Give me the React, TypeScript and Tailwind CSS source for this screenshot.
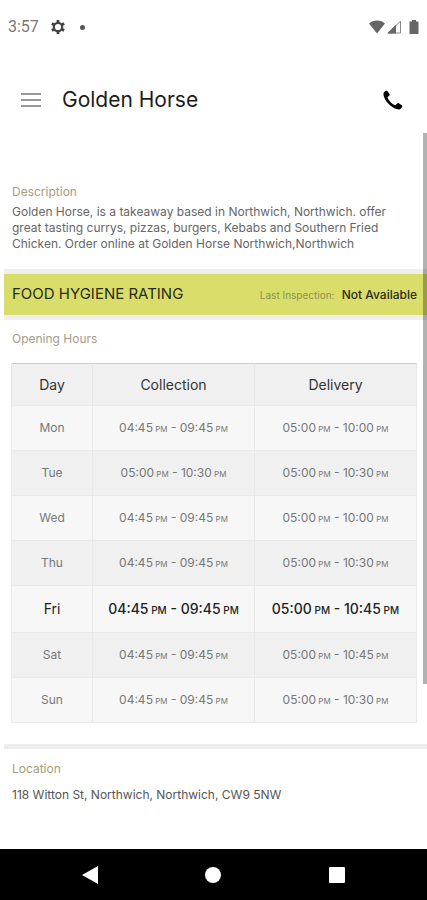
import React from "react";

type Slot = [string, string];

interface OpeningDay {
  day: string;
  collection: Slot;
  delivery: Slot;
}

const openingHours: OpeningDay[] = [
  { day: "Mon", collection: ["04:45", "09:45"], delivery: ["05:00", "10:00"] },
  { day: "Tue", collection: ["05:00", "10:30"], delivery: ["05:00", "10:30"] },
  { day: "Wed", collection: ["04:45", "09:45"], delivery: ["05:00", "10:00"] },
  { day: "Thu", collection: ["04:45", "09:45"], delivery: ["05:00", "10:30"] },
  { day: "Fri", collection: ["04:45", "09:45"], delivery: ["05:00", "10:45"] },
  { day: "Sat", collection: ["04:45", "09:45"], delivery: ["05:00", "10:45"] },
  { day: "Sun", collection: ["04:45", "09:45"], delivery: ["05:00", "10:30"] },
];

const today = "Fri";

const GearIcon = () => (
  <svg className="h-4 w-4" viewBox="0 0 16 16" stroke="currentColor" fill="none">
    <circle cx="8" cy="8" r="4.2" strokeWidth="2.2" />
    <path
      d="M8 1v2.5M8 12.5V15M1.9 4.5l2.2 1.3M11.9 10.2l2.2 1.3M1.9 11.5l2.2-1.3M11.9 5.8l2.2-1.3"
      strokeWidth="2.8"
    />
  </svg>
);

const StatusBar = () => (
  <div className="flex h-[54px] items-center justify-between px-2 text-[#666666]">
    <div className="flex items-center">
      <span className="w-[42px] font-['Roboto',sans-serif] text-base text-[#777777]">
        3:57
      </span>
      <span className="text-[#444444]">
        <GearIcon />
      </span>
      <span className="ml-[14px] h-[5px] w-[5px] rounded-full bg-[#555555]" />
    </div>
    <div className="flex items-center">
      <svg className="h-4 w-4" viewBox="0 0 16 16" fill="currentColor">
        <path d="M8 14.5 0 4.5C2 2.5 5 1.5 8 1.5s6 1 8 3z" />
      </svg>
      <svg className="ml-0.5 h-4 w-4" viewBox="0 0 16 16">
        <path d="M1.5 14 13.5 2v12z" fill="none" stroke="#888888" />
        <path d="M0 14.5 9 5.5v9z" fill="currentColor" />
      </svg>
      <svg className="ml-1.5 h-4 w-[10px]" viewBox="0 0 10 16" fill="currentColor">
        <path d="M3 1h4v1.5h2.5V15H.5V2.500H3z" />
      </svg>
    </div>
  </div>
);

const Header = () => (
  <header className="flex h-[79px] items-center pl-[21px] pr-6 pt-[13px]">
    <button aria-label="Menu" className="flex w-5 flex-col gap-1">
      <span className="h-[2px] bg-[#999999]" />
      <span className="h-[2px] bg-[#999999]" />
      <span className="h-[2px] bg-[#999999]" />
    </button>
    <h1 className="ml-[21px] flex-1 text-[21px] leading-7 text-[#1c1c1c]">
      Golden Horse
    </h1>
    <button aria-label="Call" className="text-black">
      <svg className="h-5 w-5" viewBox="0 0 20 20" fill="currentColor">
        <path d="M.8 2.6C1.3 1.7 2.3 1 3.300.7c.5-.1.9.1 1.2.5l2 2.9c.3.5.3 1-.1 1.4L4.700 7c-.2.3-.2.5-.1.8.7 1.7 1.7 3.1 3 4.4 1.3 1.3 2.6 2.2 4.3 3 .3.2.6.1.8-.1l1.6-1.7c.4-.4.9-.4 1.4-.1l3.1 1.9c.5.3.7.8.5 1.3-.4 1.1-1.3 2.2-2.400 2.7-1 .4-2.1.3-3.300-.1C10.500 18.1 7.500 16 5 13.200 2.800 10.700 1.200 8.100.6 5.400.4 4.400.4 3.400.8 2.600z" />
      </svg>
    </button>
  </header>
);

const TimeRange = ({ slot, active }: { slot: Slot; active: boolean }) => {
  const pm = active ? "text-[10px]" : "text-[8px]";

  return (
    <span className={active ? "font-medium" : "font-normal"}>
      {slot[0]}
      <span className={pm}> PM</span> - {slot[1]}
      <span className={pm}> PM</span>
    </span>
  );
};

const HoursTable = () => (
  <table className="mt-4 w-full table-fixed border-collapse border border-[#e6e6e6] border-t-[#cccccc] text-center">
    <thead>
      <tr className="h-[42px] bg-[#f0f0f0] text-sm text-[#333333]">
        <th className="w-1/5 border-x border-[#e6e6e6] font-normal">Day</th>
        <th className="w-2/5 border-x border-[#e6e6e6] font-normal">
          Collection
        </th>
        <th className="w-2/5 border-x border-[#e6e6e6] font-normal">
          Delivery
        </th>
      </tr>
    </thead>
    <tbody>
      {openingHours.map(({ day, collection, delivery }) => (
        <tr
          key={day}
          className={
            day === today
              ? "h-[47px] text-sm text-[#222222] odd:bg-[#f7f7f7]"
              : "h-[45px] text-xs text-[#777777] odd:bg-[#f7f7f7] even:bg-[#f0f0f0]"
          }
        >
          <td className="border border-[#e9e9e9]">{day}</td>
          <td className="border border-[#e9e9e9]">
            <TimeRange slot={collection} active={day === today} />
          </td>
          <td className="border border-[#e9e9e9]">
            <TimeRange slot={delivery} active={day === today} />
          </td>
        </tr>
      ))}
    </tbody>
  </table>
);

const NavBar = () => (
  <nav className="mt-auto flex h-[51px] items-center justify-around bg-black px-7 text-white">
    <button aria-label="Back">
      <svg className="h-[18px] w-4" viewBox="0 0 16 18" fill="currentColor">
        <path d="M0 9 16 0v18z" />
      </svg>
    </button>
    <button aria-label="Home" className="h-4 w-4 rounded-full bg-white" />
    <button aria-label="Recent apps" className="h-4 w-4 rounded-[1px] bg-white" />
  </nav>
);

const App = () => {
  return (
    <div className="flex min-h-screen flex-col bg-white font-['Inter',sans-serif]">
      <StatusBar />
      <Header />

      <main className="relative flex-1 pl-1">
        <section className="px-2 pb-[17px] pt-[51px]">
          <h2 className="text-xs leading-4 text-[#a89b7c]">Description</h2>
          <p className="mt-1 pr-6 text-xs leading-4 text-[#666666]">
            Golden Horse, is a takeaway based in Northwich, Northwich. offer
            great tasting currys, pizzas, burgers, Kebabs and Southern Fried
            Chicken. Order online at Golden Horse Northwich,Northwich
          </p>
        </section>

        <section className="flex h-[51px] items-center justify-between border-y-[5px] border-[#eeeeee] bg-[#d9de6b] pl-2 pr-[10px]">
          <h2 className="text-[15px] text-[#2b2b1a]">FOOD HYGIENE RATING</h2>
          <p className="text-xs font-medium text-[#2b2b1a]">
            <span className="mr-1 text-[10px] font-normal text-[#8f9150]">
              Last Inspection:
            </span>{" "}
            Not Available
          </p>
        </section>

        <section className="pb-[21px] pl-[7px] pr-[10px] pt-[11px]">
          <h2 className="pl-px text-xs leading-4 text-[#a89b8c]">
            Opening Hours
          </h2>
          <HoursTable />
        </section>

        <section className="border-t-[5px] border-[#eeeeee] px-2 pb-6 pt-3">
          <h2 className="text-xs leading-4 text-[#a89b7c]">Location</h2>
          <p className="mt-[10px] text-xs leading-4 text-[#555555]">
            118 Witton St, Northwich, Northwich, CW9 5NW
          </p>
        </section>

        {/* scroll indicator */}
        <div className="absolute right-0 top-0 h-[77%] w-1 bg-black/30" />
      </main>

      <NavBar />
    </div>
  );
};

export default App;
